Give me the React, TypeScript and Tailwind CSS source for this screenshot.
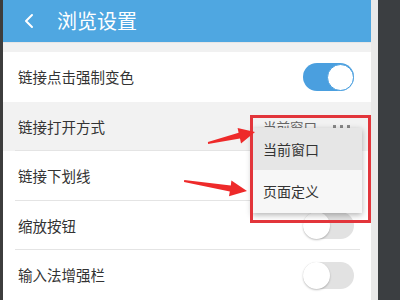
import { ChevronLeft } from "lucide-react"

const font = { fontFamily: '"Noto Sans CJK SC", "Noto Sans", sans-serif' }

function Toggle({ on }: { on: boolean }) {
  return on ? (
    <div className="w-[51px] h-[28px] rounded-full bg-[#4a9fdf] flex items-center justify-end">
      <div className="w-[27px] h-[27px] rounded-full bg-white border-[1.5px] border-[#4a9fdf]" />
    </div>
  ) : (
    <div className="w-[51px] h-[27px] rounded-full bg-[#e2e2e2] flex items-center justify-start">
      <div className="w-[27px] h-[27px] rounded-full bg-white shadow-[0_1px_2px_rgba(0,0,0,0.25)]" />
    </div>
  )
}

function Row({ label, toggle, active, divider = true, children }: { label: string; toggle?: boolean; active?: boolean; divider?: boolean; children?: React.ReactNode }) {
  return (
    <div className={`relative h-[50px] flex items-center justify-between pl-[15px] ${children ? "pr-[21px]" : "pr-[17px]"} ${active ? "bg-[#f2f2f2]" : "bg-white"}`}>
      <span className="text-[14.5px] text-[#333]">{label}</span>
      {toggle !== undefined && <Toggle on={toggle} />}
      {children}
      {divider && <div className="absolute left-[12px] right-[11px] bottom-0 h-px bg-[#e4e4e4]" />}
    </div>
  )
}

export default function App() {
  return (
    <div className="relative w-[400px] h-[300px] flex overflow-hidden bg-[#3b3e41]" style={font}>
      <div className="w-[3px] bg-[#3d3d3d]" />
      <div className="w-[368px] flex flex-col bg-white">
        <div className="h-[42px] bg-[#4fa7e1] flex items-center text-white">
          <ChevronLeft className="ml-[14px] w-[24px] h-[24px]" strokeWidth={2} />
          <span className="ml-[16px] text-[20px]">浏览设置</span>
        </div>
        <div className="h-[11px] bg-[#f1f1f1] border-t border-[#e6e6e6]" />
        <Row label="链接点击强制变色" toggle={true} divider={false} />
        <Row label="链接打开方式" active>
          <div className="flex items-center text-[13.5px] text-[#666]">
            <span>当前窗口</span>
            <div className="ml-[16px] flex gap-[4px]">
              <div className="w-[3px] h-[3px] bg-[#888]" />
              <div className="w-[3px] h-[3px] bg-[#888]" />
              <div className="w-[3px] h-[3px] bg-[#888]" />
            </div>
          </div>
        </Row>
        <Row label="链接下划线" />
        <Row label="缩放按钮" toggle={false} />
        <Row label="输入法增强栏" toggle={false} divider={false} />
      </div>
      <div className="w-[7px] bg-[#e9e9e9]" />
      <div className="flex-1 bg-[#3b3e41]" />

      {/* popup menu */}
      <div className="absolute left-[252px] top-[128px] w-[110px] bg-[#f7f7f7] shadow-[0_2px_6px_rgba(0,0,0,0.3)] text-[14px] text-[#333]">
        <div className="h-[42px] bg-[#e6e6e6] flex items-center pl-[11px]">当前窗口</div>
        <div className="h-[43px] flex items-center pl-[11px]">页面定义</div>
      </div>

      {/* annotation */}
      <div className="absolute left-[250px] top-[115px] w-[121px] h-[108px] border-[3px] border-[#e2353b]" />
      <svg className="absolute left-0 top-0 pointer-events-none" width="400" height="300" viewBox="0 0 400 300">
        <polygon fill="#ee2a2a" points="208.1,144 240,138.6 241,143.4 255,132 237.6,128 238.6,132.8 207.9,142" />
        <polygon fill="#ee2a2a" points="184,182 229.8,191.4 229,196.2 247,191 231.4,180.6 230.8,185.4 184.2,180" />
      </svg>
    </div>
  )
}
